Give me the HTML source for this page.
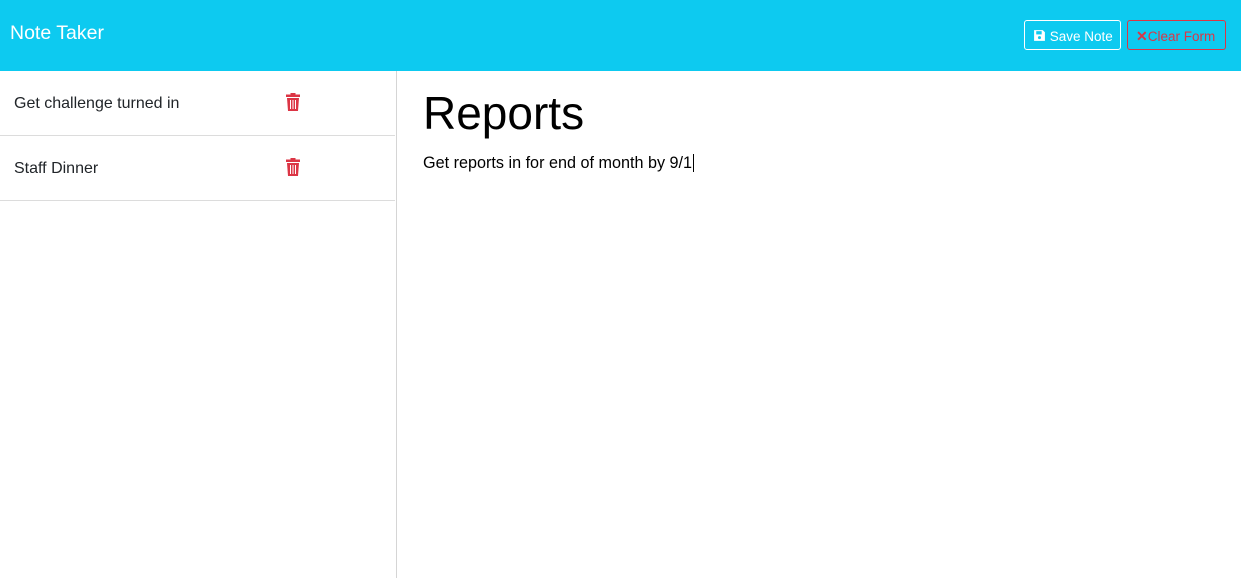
<!DOCTYPE html>
<html><head><style>
body{margin:0;width:1241px;height:578px;overflow:hidden;background:#fff;font-family:"Liberation Sans",sans-serif;color:#212529}
.nav{height:71px;background:#0dcaf0;position:relative}
.brand{position:absolute;left:10px;top:22px;color:#fff;font-size:19.5px}
.btn{position:absolute;top:20px;border:1px solid;border-radius:3px;font-size:13.5px;line-height:31px;box-sizing:border-box;padding-left:8px}
.save{left:1024px;width:97px;border-color:#fff;color:#fff;height:30px}
.clear{left:1127px;width:99px;border-color:#dc3545;color:#dc3545;height:30px}
.side{position:absolute;left:0;top:71px;width:396px;height:507px;border-right:1px solid #d5d5d5}
.item{height:64px;border-bottom:1px solid #dcdcdc;position:relative;width:395px}
.item span{position:absolute;left:14px;top:24px;font-size:16px}
.trash{position:absolute;left:285px;top:22px}
h1{position:absolute;left:423px;top:86px;margin:0;font-weight:400;font-size:46px;color:#000}
.txt{position:absolute;left:423px;top:154px;font-size:16.2px;color:#000}
</style></head><body>
<div class="nav"><div class="brand">Note Taker</div>
<div class="btn save"><svg width="13" height="13" viewBox="0 0 12 12" style="vertical-align:-1px"><path d="M1 1h8l2 2v8H1z" fill="#fff"/><rect x="3" y="2" width="5" height="3" fill="#0dcaf0"/><circle cx="6" cy="8" r="1.4" fill="#0dcaf0"/></svg> Save Note</div>
<div class="btn clear"><b style="font-size:14px">✕</b>Clear Form</div>
</div>
<div class="side">
<div class="item" style="height:64px"><span>Get challenge turned in</span><svg class="trash" width="16" height="18" viewBox="0 0 16 18"><rect x="1" y="1.5" width="14" height="2.5" fill="#dc3545"/><rect x="5.5" y="0" width="5" height="2" fill="#dc3545"/><path d="M2 5h12l-1 13H3z" fill="#dc3545"/><path d="M5.5 7v9M8 7v9M10.5 7v9" stroke="#fff" stroke-width="1"/></svg></div>
<div class="item"><span>Staff Dinner</span><svg class="trash" width="16" height="18" viewBox="0 0 16 18"><rect x="1" y="1.5" width="14" height="2.5" fill="#dc3545"/><rect x="5.5" y="0" width="5" height="2" fill="#dc3545"/><path d="M2 5h12l-1 13H3z" fill="#dc3545"/><path d="M5.5 7v9M8 7v9M10.5 7v9" stroke="#fff" stroke-width="1"/></svg></div>
</div>
<h1>Reports</h1>
<div class="txt">Get reports in for end of month by 9/1<span style="border-left:1px solid #000;margin-left:1px"></span></div>
</body></html>
